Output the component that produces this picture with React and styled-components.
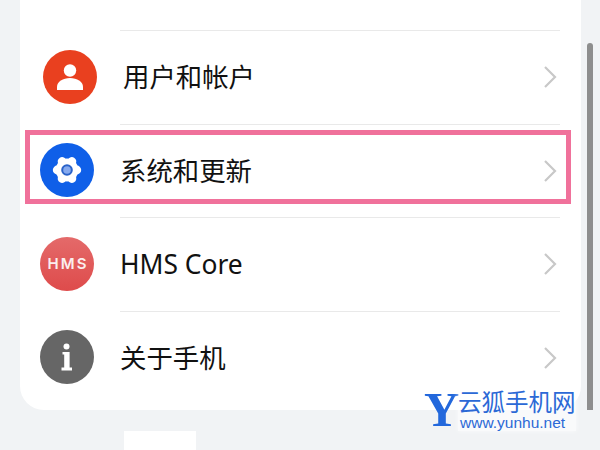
import React from "react";
import styled, { createGlobalStyle } from "styled-components";

const GlobalStyle = createGlobalStyle`
  html, body {
    margin: 0;
    padding: 0;
    background: #f1f3f5;
    font-family: "Noto Sans", "Noto Sans CJK SC", sans-serif;
  }
`;

const Page = styled.div`
  position: relative;
  width: 600px;
  height: 450px;
  overflow: hidden;
  background: #f1f3f5;
`;
const Main = styled.div`
  display: flex;
  padding-left: 20px;
`;
const Card = styled.div`
  width: 561px;
  height: 410px;
  box-sizing: border-box;
  padding-top: 30px;
  background: #fff;
  border-radius: 0 0 24px 24px;
`;
const Row = styled.div`
  display: grid;
  grid-template-columns: 100px 440px;
  height: 93.5px;
`;
const IconCell = styled.div`
  display: flex;
  align-items: center;
  padding-left: ${p => 20 + (p.$shift || 0)}px;
`;
const Body = styled.div`
  display: flex;
  align-items: center;
  justify-content: space-between;
  box-sizing: border-box;
  border-top: 1.5px solid #e9e9e9;
  padding-right: 3px;
`;
const Label = styled.span`
  margin-left: ${p => p.$shift || 0}px;
  font-size: 26.4px;
  line-height: 1;
  color: #111;
`;
const Circle = styled.div`
  display: flex;
  align-items: center;
  justify-content: center;
  width: 54px;
  height: 54px;
  border-radius: 50%;
  background: ${p => p.$bg};
`;
const HmsText = styled.span`
  font-family: "Inter", sans-serif;
  font-size: 15px;
  font-weight: 600;
  letter-spacing: 2px;
  margin-right: -2px;
  color: #fbeeee;
`;
const Scrollbar = styled.div`
  width: 6px;
  height: 367px;
  margin: 43px 0 0 6px;
  border-radius: 3px 3px 0 0;
  background: #8e8e8e;
`;
const TabItem = styled.div`
  width: 72px;
  height: 19px;
  margin: 21px 0 0 124px;
  background: #fff;
`;
const Highlight = styled.div`
  position: absolute;
  left: 25px;
  top: 130px;
  width: 546px;
  height: 74px;
  box-sizing: border-box;
  border: 5px solid #f0719b;
`;
const Watermark = styled.div`
  position: absolute;
  left: 424px;
  top: 388px;
  display: flex;
  align-items: flex-start;
  color: #2c69d6;
`;
const LogoY = styled.span`
  width: 34px;
  font-family: "Liberation Serif", serif;
  font-size: 49px;
  font-weight: 700;
  line-height: 44px;
  color: #2368dc;
`;
const BrandCol = styled.div`
  display: flex;
  flex-direction: column;
  background: rgba(255, 255, 255, 0.55);
  box-shadow: 0 0 5px rgba(255, 255, 255, 0.7);
`;
const BrandName = styled.span`
  font-family: "Noto Sans CJK SC", sans-serif;
  font-size: 23.5px;
  line-height: 27px;
  white-space: nowrap;
`;
const BrandUrl = styled.span`
  font-family: "Liberation Sans", sans-serif;
  font-size: 15.5px;
  line-height: 16px;
  margin-left: 2px;
  white-space: nowrap;
`;

const Chevron = () => (
  <svg width="14" height="24" viewBox="0 0 14 24">
    <path d="M2 2 L12 12 L2 22" fill="none" stroke="#c8c8c8" strokeWidth="2.2" />
  </svg>
);

const UserIcon = () => (
  <svg width="30" height="30" viewBox="0 0 30 30">
    <circle cx="15" cy="8.5" r="6.2" fill="#fff" />
    <path d="M2 28 V25 C2 19.5 8 16 15 16 C22 16 28 19.5 28 25 V28 Z" fill="#fff" />
  </svg>
);

const GearIcon = () => (
  <svg width="30" height="30" viewBox="0 0 30 30">
    <g fill="#fff">
      <circle cx="15" cy="15" r="11.4" />
      {[30, 90, 150, 210, 270, 330].map(a => (
        <circle key={a} cx="15" cy="5.2" r="4.4" transform={`rotate(${a} 15 15)`} />
      ))}
    </g>
    <circle cx="15" cy="15" r="5.8" fill="#2a62c8" />
    <circle cx="15" cy="15" r="3.8" fill="#86a9ee" />
  </svg>
);

const InfoIcon = () => (
  <svg width="14" height="28" viewBox="0 0 14 28">
    <g fill="#fff">
      <circle cx="6.5" cy="3.4" r="3" />
      <path d="M2.5 9 H9.6 V24.6 H12 V27.5 H1.5 V24.6 H4.2 V11.6 H2.5 Z" />
    </g>
  </svg>
);

const items = [
  { label: "用户和帐户", bg: "#e9401f", icon: <UserIcon />, shift: 3 },
  { label: "系统和更新", bg: "#0f5fe8", icon: <GearIcon /> },
  {
    label: "HMS Core",
    bg: "linear-gradient(#e46a6a, #de4b4b)",
    icon: <HmsText>HMS</HmsText>
  },
  { label: "关于手机", bg: "#666", icon: <InfoIcon /> }
];

export default function App() {
  return (
    <Page>
      <GlobalStyle />
      <Main>
        <Card>
          {items.map(item => (
            <Row key={item.label}>
              <IconCell $shift={item.shift}>
                <Circle $bg={item.bg}>{item.icon}</Circle>
              </IconCell>
              <Body>
                <Label $shift={item.shift}>{item.label}</Label>
                <Chevron />
              </Body>
            </Row>
          ))}
        </Card>
        <Scrollbar />
      </Main>
      <TabItem />
      <Highlight />
      <Watermark>
        <LogoY>Y</LogoY>
        <BrandCol>
          <BrandName>云狐手机网</BrandName>
          <BrandUrl>www.yunhu.net</BrandUrl>
        </BrandCol>
      </Watermark>
    </Page>
  );
}
